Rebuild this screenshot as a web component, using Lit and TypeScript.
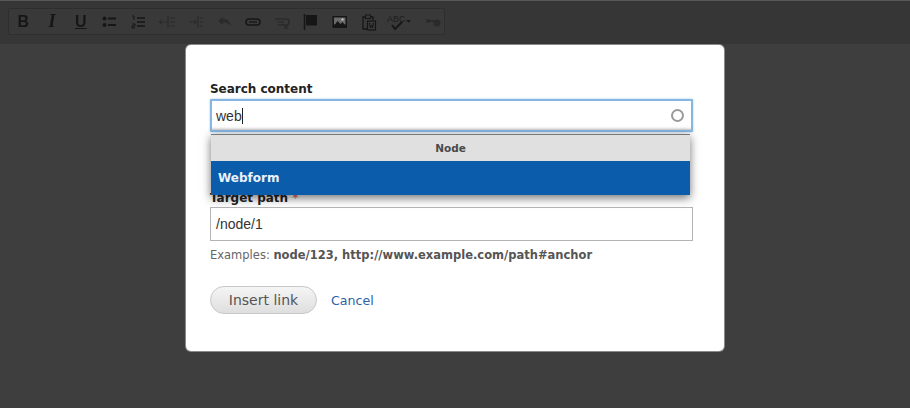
import { LitElement, html, css, svg } from "lit";
import { customElement } from "lit/decorators.js";

const ic = (w: number, body: unknown) =>
  html`<span class="tool" style="width:${w}px"><svg width="18" height="18" viewBox="0 0 18 18">${body}</svg></span>`;

const D = "#161616";
const F = "#2b2b2b";

@customElement("app-root")
export class AppRoot extends LitElement {
  static styles = css`
    :host { display: block; width: 910px; height: 408px; position: relative; overflow: hidden; background: #3e3e3e;
      font-family: "DejaVu Sans", sans-serif; }
    .top { height: 44px; box-sizing: border-box; background: #363636; padding: 7px 8px 0; border-top: 1px solid #585858; }
    .bar { width: 437px; height: 27px; box-sizing: border-box; border: 1px solid #2e2e2e; background: #393939; display: flex; align-items: center; border-radius: 2px; }
    .tool { display: flex; align-items: center; justify-content: center; flex: none; height: 25px; color: #161616; filter: blur(.45px); }
    .glyph { font: bold 16px "Liberation Sans", sans-serif; width: 28.7px; }
    .i { font-style: italic; font-family: "Liberation Serif", serif; font-size: 18px; }
    .u { text-decoration: underline; }
    .overlay { position: absolute; left: 186px; top: 45px; width: 538px; height: 306px; box-sizing: border-box; background: #fff; border-radius: 5px; padding: 36px 24px 0; box-shadow: 0 0 0 1px #8a8a8a; display: flex; flex-direction: column; }
    label { display: block; font-weight: bold; font-size: 12px; line-height: 16px; color: #222; letter-spacing: -0.02px; }
    .search { margin-top: 2px; height: 33px; width: 483px; box-sizing: border-box; border: 2px solid #86b6e2; box-shadow: 0 0 2px #8fbce6, inset 0 -4px 3px -3px #bbb; display: flex; align-items: center; padding: 0 7px 0 4px; font: 14px "Liberation Sans", sans-serif; color: #333; border-radius: 1px; }
    .caret { width: 1px; height: 16px; background: #222; }
    .ring { margin-left: auto; width: 13px; height: 13px; box-sizing: border-box; border: 2px solid #9a9a9a; border-radius: 50%; }
    .dropdown { position: absolute; left: 25px; top: 89px; width: 479px; box-shadow: 0 3px 9px rgba(0,0,0,.55); z-index: 2; }
    .dh { height: 27px; background: #e0e0e0; display: flex; align-items: center; justify-content: center; font-weight: bold; font-size: 10.5px; color: #4a4a4a; border-top: 1px solid #777; box-sizing: border-box; }
    .di { height: 34px; background: #0b5cab; color: #e9f1fa; font-weight: bold; font-size: 12px; display: flex; align-items: center; padding-left: 7px; box-sizing: border-box; }
    .tlabel { margin-top: 58px; }
    .tlabel span { color: #e77; }
    .target { margin-top: 1px; width: 483px; height: 34px; box-sizing: border-box; border: 1px solid #b4b4b4; display: flex; align-items: center; padding-left: 5px; font: 14px "Liberation Sans", sans-serif; color: #333; }
    .hint { margin-top: 6px; font-size: 11.5px; line-height: 16px; color: #666; }
    .hint b { color: #555; }
    .actions { margin-top: 23px; display: flex; align-items: center; gap: 14px; }
    .btn { width: 107px; height: 28px; box-sizing: border-box; border: 1px solid #c8c8c8; border-radius: 14px; background: linear-gradient(#f5f5f5, #dedede); display: flex; align-items: center; justify-content: center; font-size: 14px; color: #555; }
    .cancel { font-size: 12.6px; color: #2a62a8; }
  `;

  render() {
    return html`
      <div class="top">
        <div class="bar">
          <span class="tool glyph">B</span>
          <span class="tool glyph i">I</span>
          <span class="tool glyph u">U</span>
          ${ic(29, svg`<circle cx="3.5" cy="5.5" r="2" fill="${D}"/><circle cx="3.5" cy="12" r="2" fill="${D}"/><path d="M7 5.500h8M7 12h8" stroke="${D}" stroke-width="1.800"/>`)}
          ${ic(29, svg`<path d="M2 3h2v4M2 11h3v2H2v2h3" fill="none" stroke="${D}" stroke-width="1"/><path d="M7 5h8M7 9h8M7 13h8" stroke="${D}" stroke-width="1.500"/>`)}
          ${ic(28, svg`<path d="M1 9h9M3.500 7 1.500 9l2 2M10 3v12M12 5h5M12 9h5M12 13h5" fill="none" stroke="${F}" stroke-width="1.100"/>`)}
          ${ic(29, svg`<path d="M2 9h8M7.500 7l2 2-2 2M11 3v12M13 5h3M13 9h3M13 13h3" fill="none" stroke="${F}" stroke-width="1.100"/>`)}
          ${ic(29, svg`<path d="M7 4 2 8l5 4V9.500c4 0 6 1 8 3.500-1-5-4-7-8-7.500z" fill="${F}"/>`)}
          ${ic(28, svg`<rect x="2" y="6" width="14" height="6" rx="3" fill="none" stroke="${D}" stroke-width="1.500"/><path d="M5 9h8" stroke="${D}" stroke-width="1.300"/>`)}
          ${ic(29, svg`<path d="M2 6h11a2 2 0 0 1 0 6H5M5 9h6" fill="none" stroke="${F}" stroke-width="1.500"/><path d="m11 12 4 4m0-4-4 4" stroke="${F}" stroke-width="1.200"/>`)}
          ${ic(29, svg`<path d="M2.500 1v16" stroke="${D}" stroke-width="1.500"/><path d="M4 2h11v10.500H4z" fill="${D}"/>`)}
          ${ic(29, svg`<rect x="1.500" y="3" width="14.500" height="12" fill="${D}"/><rect x="3" y="4.500" width="11.500" height="7" fill="#6a6a6a"/><path d="m2.500 13.500 4-5.500 3 3 2-2 3.500 4.500z" fill="${D}"/><circle cx="11.500" cy="6.500" r="1.200" fill="#bbb"/>`)}
          ${ic(29, svg`<path d="M5 4H3v12h4" fill="none" stroke="${D}" stroke-width="1.300"/><path d="M11 4h2v3" fill="none" stroke="${D}" stroke-width="1.300"/><rect x="5.500" y="2" width="5" height="3.500" fill="none" stroke="${D}"/><rect x="7.500" y="8" width="8" height="9" fill="none" stroke="${D}" stroke-width="1.200"/><path d="m9.500 10 1 5 1-3 1 3 1-5" fill="none" stroke="${D}"/>`)}
          <span class="tool" style="width:33px"><svg width="26" height="18" viewBox="0 0 26 18"><text x="0" y="9" font-family="Liberation Sans, sans-serif" font-size="9" fill="#1c1c1c">ABC</text><path d="m5 12 3 4 7-7" fill="none" stroke="${D}" stroke-width="2"/><path d="m19 7 2.500 2.500L24 7z" fill="${D}"/></svg></span>
          ${ic(33, svg`<circle cx="4" cy="8" r="2" fill="${F}"/><path d="M5 8h8" stroke="${F}" stroke-width="2"/><circle cx="13" cy="10" r="3.500" fill="${F}"/>`)}
        </div>
      </div>
      <div class="overlay">
        <label>Search content</label>
        <div class="search">web<span class="caret"></span><span class="ring"></span></div>
        <div class="dropdown">
          <div class="dh">Node</div>
          <div class="di">Webform</div>
        </div>
        <label class="tlabel">Target path <span>*</span></label>
        <div class="target">/node/1</div>
        <div class="hint">Examples: <b>node/123, http://www.example.com/path#anchor</b></div>
        <div class="actions"><div class="btn">Insert link</div><div class="cancel">Cancel</div></div>
      </div>
    `;
  }
}
